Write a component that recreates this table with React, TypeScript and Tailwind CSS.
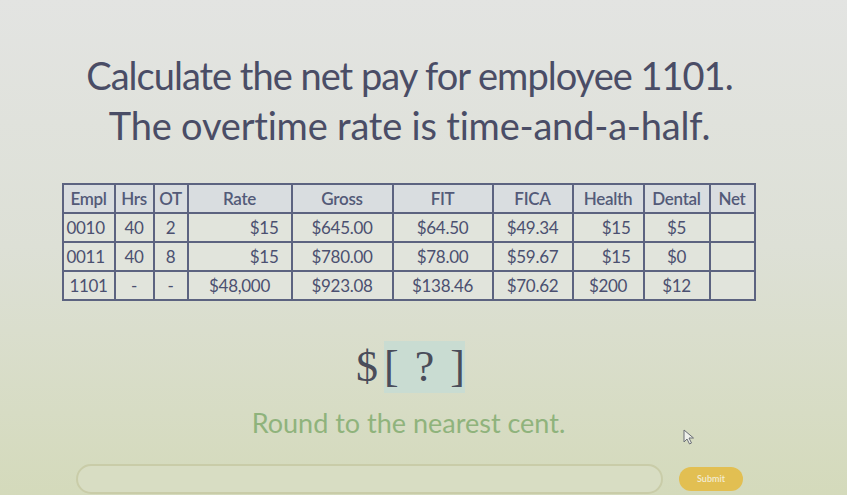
import React from 'react';

type Align = 'left' | 'center' | 'right';

interface Column {
    label: string;
    width: string;
    align: Align;
}

const columns: Column[] = [
    { label: 'Empl', width: 'w-[52px]', align: 'left' },
    { label: 'Hrs', width: 'w-[39px]', align: 'center' },
    { label: 'OT', width: 'w-[34px]', align: 'center' },
    { label: 'Rate', width: 'w-[104px]', align: 'right' },
    { label: 'Gross', width: 'w-[101px]', align: 'center' },
    { label: 'FIT', width: 'w-[100px]', align: 'center' },
    { label: 'FICA', width: 'w-[80px]', align: 'center' },
    { label: 'Health', width: 'w-[71px]', align: 'right' },
    { label: 'Dental', width: 'w-[66px]', align: 'center' },
    { label: 'Net', width: 'w-[45px]', align: 'center' },
];

const rows: string[][] = [
    ['0010', '40', '2', '$15', '$645.00', '$64.50', '$49.34', '$15', '$5', ''],
    ['0011', '40', '8', '$15', '$780.00', '$78.00', '$59.67', '$15', '$0', ''],
    ['1101', '-', '-', '$48,000', '$923.08', '$138.46', '$70.62', '$200', '$12', ''],
];

const alignClass: Record<Align, string> = {
    left: 'text-left pl-[3px]',
    center: 'text-center',
    right: 'text-right pr-3',
};

function PayrollTable() {
    return (
        <table
            className="table-fixed border-collapse text-[17px] leading-none tracking-[-0.3px] text-[#4b5070]"
            style={{ fontFamily: 'Lato, "Open Sans", sans-serif' }}
        >
            <thead>
                <tr className="h-[29px] bg-[#d9dde0]">
                    {columns.map((col) => (
                        <th
                            key={col.label}
                            className={`${col.width} border-2 border-[#5c6380] font-semibold text-center text-[#535a78]`}
                        >
                            {col.label}
                        </th>
                    ))}
                </tr>
            </thead>
            <tbody>
                {rows.map((row, r) => (
                    <tr key={r} className="h-[29px] bg-[#e1e4dc]">
                        {row.map((cell, c) => {
                            const col = columns[c];
                            const align =
                                r === 2 && (c === 0 || c === 3 || c === 7) ? 'text-center' : alignClass[col.align];
                            return (
                                <td key={c} className={`${col.width} border-2 border-[#5c6380] ${align}`}>
                                    {cell}
                                </td>
                            );
                        })}
                    </tr>
                ))}
            </tbody>
        </table>
    );
}

function Cursor() {
    return (
        <svg width="14" height="16" viewBox="0 0 14 16" className="absolute left-[683px] top-[429px]">
            <path d="M1 1 L1 13 L4 10 L6.5 15 L8.5 14 L6 9 L10.5 9 Z" fill="#eef0ea" stroke="#6b6f76" strokeWidth="1" />
        </svg>
    );
}

export default function App() {
    return (
        <div className="relative w-[847px] h-[495px] overflow-hidden bg-linear-to-b from-[#e3e4e2] via-[#dde0d6] to-[#d4dabb]">
            <div className="flex flex-col items-center">
                {/* Question */}
                <div
                    className="mt-[50px] ml-[-28px] text-center text-[38px] leading-[50px] tracking-[-1px] text-[#4a4d66]"
                    style={{ fontFamily: 'Lato, "Open Sans", sans-serif' }}
                >
                    <div>Calculate the net pay for employee 1101.</div>
                    <div className="tracking-[-0.2px]">The overtime rate is time-and-a-half.</div>
                </div>

                {/* Table */}
                <div className="mt-[33px] ml-[-30px]">
                    <PayrollTable />
                </div>

                {/* Answer */}
                <div
                    className="mt-[40px] ml-[-26px] flex items-center text-[44px] leading-none text-[#4a4d5a]"
                    style={{ fontFamily: '"Liberation Serif", "DejaVu Serif", serif' }}
                >
                    <span>$</span>
                    <span className="ml-[6px] flex h-[52px] items-center bg-[#c9dcd2]">
                        <span>[</span>
                        <span className="px-[16px]">?</span>
                        <span>]</span>
                    </span>
                </div>

                <div
                    className="mt-[16px] ml-[-30px] text-[27px] leading-none text-[#8fb37c]"
                    style={{ fontFamily: 'Lato, "Open Sans", sans-serif' }}
                >
                    Round to the nearest cent.
                </div>

                {/* Input row */}
                <div className="mt-[28px] flex w-full items-center pl-[76px]">
                    <div className="h-[30px] w-[587px] rounded-full border-2 border-[#c9cca8] bg-[#d8ddc3]" />
                    <button
                        className="ml-[16px] h-[24px] w-[64px] rounded-full bg-[#e2bf52] text-[9px] font-semibold text-[#f3ecd2]"
                        style={{ fontFamily: 'Lato, sans-serif' }}
                    >
                        Submit
                    </button>
                </div>
            </div>
            <Cursor />
        </div>
    );
}
